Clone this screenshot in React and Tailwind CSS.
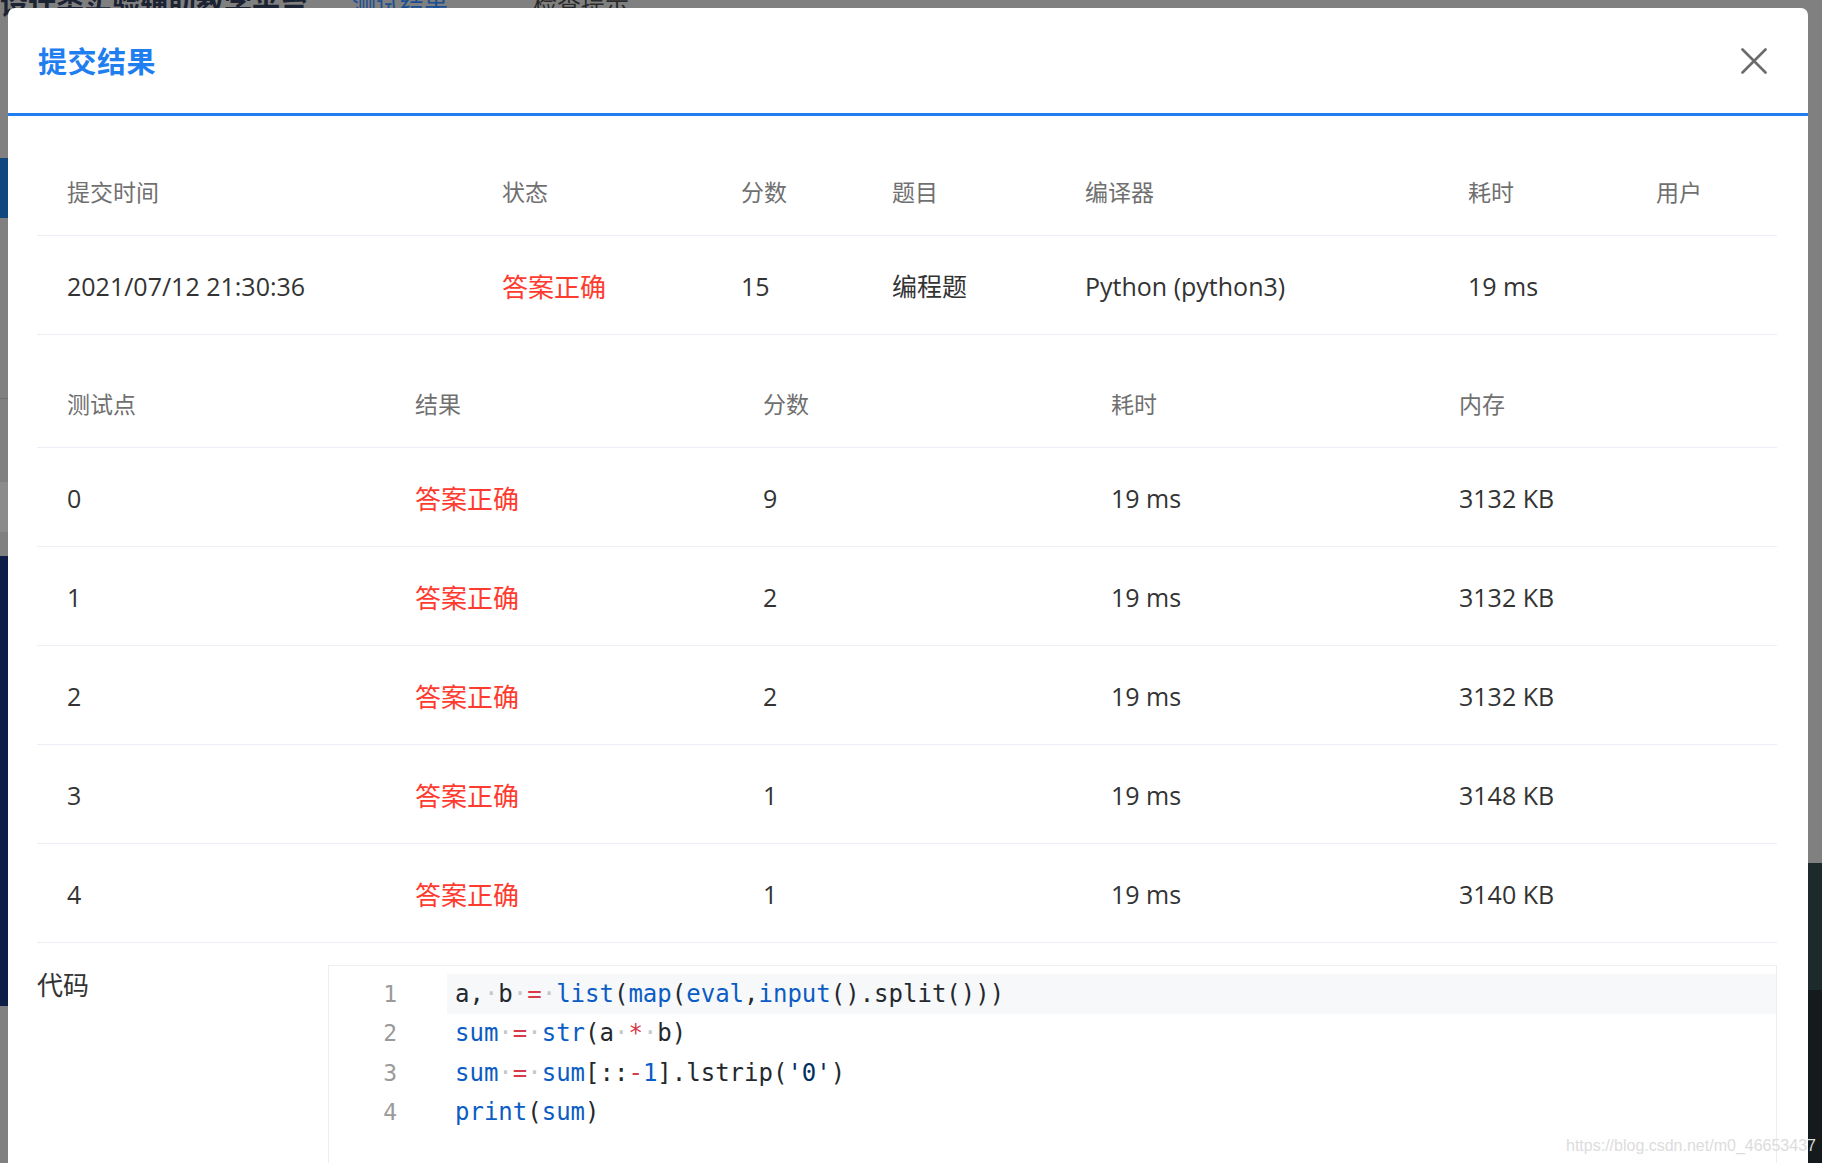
import React from "react";

const sans = { fontFamily: '"Open Sans", "Noto Sans CJK SC", sans-serif' };
const mono = { fontFamily: '"DejaVu Sans Mono", "Liberation Mono", monospace' };

const summaryCols = [
  { label: "提交时间", w: "w-[435px]" },
  { label: "状态", w: "w-[239px]" },
  { label: "分数", w: "w-[151px]" },
  { label: "题目", w: "w-[193px]" },
  { label: "编译器", w: "w-[383px]" },
  { label: "耗时", w: "w-[188px]" },
  { label: "用户", w: "flex-1" },
];

const cases = [
  { id: "0", score: "9", mem: "3132 KB" },
  { id: "1", score: "2", mem: "3132 KB" },
  { id: "2", score: "2", mem: "3132 KB" },
  { id: "3", score: "1", mem: "3148 KB" },
  { id: "4", score: "1", mem: "3140 KB" },
];

// token types: t = plain, b = builtin (blue), o = operator (red), s = string, d = whitespace dot
const codeLines = [
  [["t", "a,"], ["d"], ["t", "b"], ["d"], ["o", "="], ["d"], ["b", "list"], ["t", "("], ["b", "map"], ["t", "("], ["b", "eval"], ["t", ","], ["b", "input"], ["t", "().split()))"]],
  [["b", "sum"], ["d"], ["o", "="], ["d"], ["b", "str"], ["t", "(a"], ["d"], ["o", "*"], ["d"], ["t", "b)"]],
  [["b", "sum"], ["d"], ["o", "="], ["d"], ["b", "sum"], ["t", "[::"], ["o", "-"], ["b", "1"], ["t", "].lstrip("], ["s", "'0'"], ["t", ")"]],
  [["b", "print"], ["t", "("], ["b", "sum"], ["t", ")"]],
];

function Token({ tok }) {
  const [type, text] = tok;
  if (type === "d") return <span className="text-[#c4c7cc]">·</span>;
  if (type === "b") return <span className="text-[#0b5cc4]">{text}</span>;
  if (type === "o") return <span className="text-[#d73a49]">{text}</span>;
  if (type === "s") return <span className="text-[#032f62]">{text}</span>;
  return <span className="text-[#24292e]">{text}</span>;
}

export default function App() {
  return (
    <div className="relative w-[1822px] h-[1163px] overflow-hidden bg-[#808080]" style={sans}>
      {/* page behind the overlay */}
      <div className="absolute left-0 top-[-17px] text-[28px] font-bold text-[#1c2333] whitespace-nowrap">设计类实验辅助教学平台</div>
      <div className="absolute left-[352px] top-[-14px] text-[24px] text-[#1b4f93] whitespace-nowrap">测试结果</div>
      <div className="absolute left-[533px] top-[-14px] text-[24px] text-[#2a2a2a] whitespace-nowrap">检查提示</div>
      <div className="absolute left-0 top-[158px] w-[8px] h-[60px] bg-[#11467e]" />
      <div className="absolute left-0 top-[398px] w-[8px] h-[1px] bg-[#6f6f6f]" />
      <div className="absolute left-0 top-[482px] w-[8px] h-[50px] bg-[#8b8b8b]" />
      <div className="absolute left-0 top-[556px] w-[8px] h-[450px] bg-[#0e1c48]" />
      <div className="absolute right-0 top-[863px] w-[14px] h-[127px] bg-[#1d2a2b]" />
      <div className="absolute right-0 top-[990px] w-[14px] h-[173px] bg-[#151a1d]" />

      {/* modal */}
      <div className="absolute left-[8px] top-[8px] w-[1800px] h-[1180px] bg-white rounded-t-[7px]">
        <div className="h-[108px] flex items-center justify-between pl-[30px] pr-[41px] pt-[3px] border-b-[3px] border-[#1f7ff0]">
          <h2 className="text-[29px] font-bold text-[#1f7ff0] tracking-[0.5px]">提交结果</h2>
          <svg width="26" height="26" viewBox="0 0 26 26" className="mt-[-2px]">
            <path d="M1.5 1.5 L24.5 24.5 M24.5 1.5 L1.5 24.5" stroke="#6b6b6b" strokeWidth="2.6" strokeLinecap="round" fill="none" />
          </svg>
        </div>

        <div className="pl-[29px] pr-[31px] pt-[35px]">
          {/* summary table */}
          <div className="flex h-[85px] items-center pb-[2px] border-b border-[#ebeef5] text-[23px] text-[#707070]">
            {summaryCols.map((c) => (
              <div key={c.label} className={`${c.w} pl-[30px]`}>{c.label}</div>
            ))}
          </div>
          <div className="flex h-[99px] items-center pt-[4px] border-b border-[#ebeef5] text-[25px] text-[#333]">
            <div className="w-[435px] pl-[30px]">2021/07/12 21:30:36</div>
            <div className="w-[239px] pl-[30px] text-[26px] text-[#ff3b30]">答案正确</div>
            <div className="w-[151px] pl-[30px]">15</div>
            <div className="w-[193px] pl-[30px] text-[25px]">编程题</div>
            <div className="w-[383px] pl-[30px]">Python (python3)</div>
            <div className="w-[188px] pl-[30px]">19 ms</div>
            <div className="flex-1 pl-[30px]"></div>
          </div>

          {/* test cases */}
          <div className="mt-[28px] grid grid-cols-5 h-[85px] items-center pb-[2px] border-b border-[#ebeef5] text-[23px] text-[#707070]">
            <div className="pl-[30px]">测试点</div>
            <div className="pl-[30px]">结果</div>
            <div className="pl-[30px]">分数</div>
            <div className="pl-[30px]">耗时</div>
            <div className="pl-[30px]">内存</div>
          </div>
          {cases.map((c) => (
            <div key={c.id} className="grid grid-cols-5 h-[99px] items-center pt-[4px] border-b border-[#ebeef5] text-[25px] text-[#333]">
              <div className="pl-[30px]">{c.id}</div>
              <div className="pl-[30px] text-[26px] text-[#ff3b30]">答案正确</div>
              <div className="pl-[30px]">{c.score}</div>
              <div className="pl-[30px]">19 ms</div>
              <div className="pl-[30px]">{c.mem}</div>
            </div>
          ))}

          {/* code */}
          <div className="flex mt-[22px]">
            <div className="w-[291px] text-[26px] text-[#333] leading-[40px]">代码</div>
            <div className="flex-1 h-[260px] border border-[#eeeeee] pt-[8px]">
              {codeLines.map((line, i) => (
                <div key={i} className="flex h-[39.5px] items-center">
                  <div className="w-[118px] pr-[50px] text-right text-[23px] text-[#9a9a9a]" style={mono}>{i + 1}</div>
                  <div className={`flex-1 h-full flex items-center pl-[8px] text-[24px] whitespace-pre ${i === 0 ? "bg-[#f7f8fa]" : ""}`} style={mono}>
                    {line.map((tok, j) => <Token key={j} tok={tok} />)}
                  </div>
                </div>
              ))}
            </div>
          </div>
        </div>
      </div>

      <div className="absolute left-[1566px] top-[1134px] text-[16px] text-[#dcdcdc] whitespace-nowrap" style={{ fontFamily: '"Liberation Sans", sans-serif' }}>
        https://blog.csdn.net/m0_46653437
      </div>
    </div>
  );
}
